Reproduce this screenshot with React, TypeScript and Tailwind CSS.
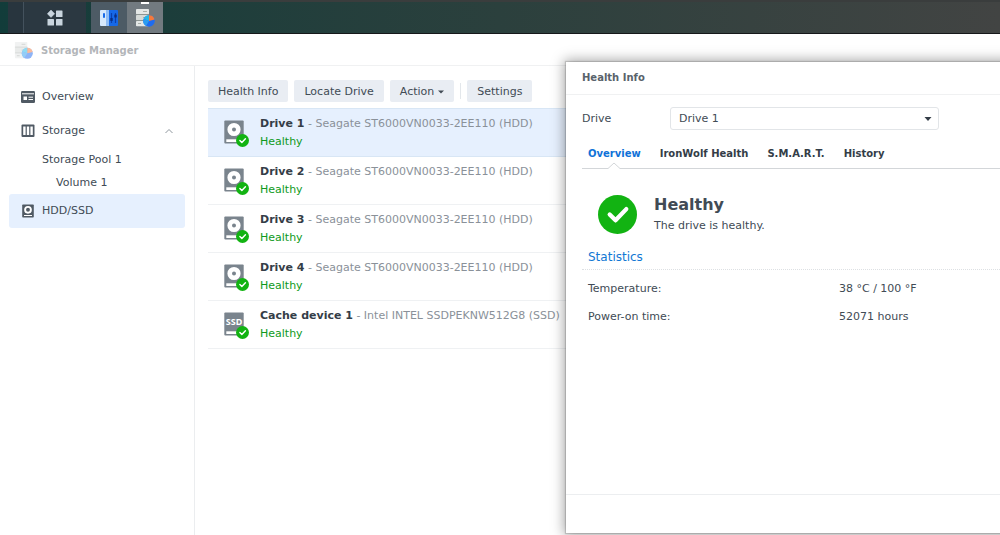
import { useState } from "react";

const drives = [
  { name: "Drive 1", model: "Seagate ST6000VN0033-2EE110 (HDD)", kind: "hdd" },
  { name: "Drive 2", model: "Seagate ST6000VN0033-2EE110 (HDD)", kind: "hdd" },
  { name: "Drive 3", model: "Seagate ST6000VN0033-2EE110 (HDD)", kind: "hdd" },
  { name: "Drive 4", model: "Seagate ST6000VN0033-2EE110 (HDD)", kind: "hdd" },
  { name: "Cache device 1", model: "Intel INTEL SSDPEKNW512G8 (SSD)", kind: "ssd" },
];

const tabs = ["Overview", "IronWolf Health", "S.M.A.R.T.", "History"];

const statistics = [
  { label: "Temperature:", value: "38 °C / 100 °F" },
  { label: "Power-on time:", value: "52071 hours" },
];

function StorageIcon({ className }: { className: string }) {
  return (
    <svg viewBox="0 0 20 20" className={className} aria-hidden="true">
      <rect x="1" y="1" width="13" height="5.2" rx="0.8" fill="#e4e7e6" />
      <rect x="1" y="7" width="13" height="5.2" rx="0.8" fill="#d5d9d7" />
      <rect x="1" y="13" width="13" height="5.2" rx="0.8" fill="#e4e7e6" />
      <path d="M8 3.5h4M8 9.5h3M3 15.5h3" stroke="#a9aeab" strokeWidth="1" />
      <path d="M1 6.5h13M1 12.5h10" stroke="#8e9592" strokeWidth="0.8" />
      <circle cx="14" cy="13" r="5.8" fill="#1f6cf0" />
      <path d="M14 13V7.2A5.8 5.8 0 0 0 8.6 11z" fill="#22b8e8" />
      <path d="M14 13V7.2A5.8 5.8 0 0 1 19.6 11.5z" fill="#f5793b" />
      <path d="M14 13l-5.4-2A5.8 5.8 0 0 0 11 17.9z" fill="#2b9cf0" />
    </svg>
  );
}

function ControlPanelIcon() {
  return (
    <svg viewBox="0 0 20 18" className="h-[18px] w-5" aria-hidden="true">
      <rect x="1" y="1" width="18" height="16" rx="1" fill="#1669e8" />
      <path d="M2 1h8v16H2a1 1 0 0 1-1-1V2a1 1 0 0 1 1-1z" fill="#d6e8fc" />
      <path d="M7 1h3v16H7z" fill="#8fbcf5" />
      <rect x="4" y="4" width="2" height="5" rx="1" fill="#1669e8" />
      <path d="M12.5 4v10M16.5 4v10" stroke="#0b3fae" strokeWidth="1.2" />
      <rect x="11.3" y="9" width="2.4" height="3" rx="0.6" fill="#082f86" />
      <rect x="15.3" y="5.5" width="2.4" height="3" rx="0.6" fill="#082f86" />
    </svg>
  );
}

function MenuIcon() {
  return (
    <svg viewBox="0 0 16 16" className="size-4" fill="#c9d5de" aria-hidden="true">
      <path d="M4 0l3.7 3.7L4 7.4.3 3.7z" stroke="#c9d5de" strokeWidth="0.5" />
      <rect x="9" y="0.5" width="6.5" height="6.5" rx="0.6" />
      <rect x="0.5" y="9" width="6.5" height="6.5" rx="0.6" />
      <rect x="9" y="9" width="6.5" height="6.5" rx="0.6" />
    </svg>
  );
}

function OverviewIcon() {
  return (
    <svg viewBox="0 0 14 12" className="h-3 w-3.5" aria-hidden="true">
      <rect width="14" height="12" rx="1.2" fill="#505a64" />
      <path d="M1 2.8h12" stroke="#fff" strokeWidth="1" />
      <rect x="2.5" y="5.5" width="3.5" height="3.5" fill="#fff" />
      <path d="M7.5 6.2H12M7.5 8.5H12" stroke="#fff" strokeWidth="1" />
    </svg>
  );
}

function PoolIcon() {
  return (
    <svg viewBox="0 0 14 14" className="size-3.5" aria-hidden="true">
      <rect x="0.5" y="0.5" width="13" height="12.5" rx="1" fill="#505a64" />
      <path d="M2.2 2.5h2.4V11H2.2zM5.8 2.5h2.4V11H5.8zM9.4 2.5h2.4V11H9.4z" fill="#fff" />
    </svg>
  );
}

function DiskIcon() {
  return (
    <svg viewBox="0 0 14 14" className="size-3.5" aria-hidden="true">
      <rect x="1.2" y="0.5" width="11.6" height="13" rx="0.8" fill="#505a64" />
      <circle cx="7" cy="5.8" r="2.9" fill="none" stroke="#fff" strokeWidth="1.9" />
      <path d="M3 11.5h8" stroke="#fff" strokeWidth="1" />
    </svg>
  );
}

function Check({ className }: { className: string }) {
  return (
    <svg viewBox="0 0 40 40" className={className} aria-hidden="true">
      <circle cx="20" cy="20" r="20" fill="#12b312" />
      <path d="M12 20l6 6L29 14.5" fill="none" stroke="#fff" strokeWidth="4.4" strokeLinecap="round" strokeLinejoin="round" />
    </svg>
  );
}

function DriveIcon({ kind }: { kind: string }) {
  return (
    <span className="relative block h-[26px] w-6 shrink-0">
      <svg viewBox="0 0 20 24" className="h-6 w-5" aria-hidden="true">
        <rect x="0.3" y="0.5" width="19.4" height="23" rx="1" fill="#7a848d" />
        {kind === "hdd" && (
          <circle cx="10" cy="9.5" r="4.3" fill="none" stroke="#fff" strokeWidth="4.6" />
        )}
        <path d="M2.3 19.3h13V22h-13z" fill="#fff" />
      </svg>
      {kind === "ssd" && (
        <span className="absolute top-1 left-0 w-5 text-center font-['Noto_Sans',sans-serif] text-[9px] leading-3 font-bold text-white">SSD</span>
      )}
      <Check className="absolute -right-px -bottom-px size-[13px]" />
    </span>
  );
}

const toolButton =
  "flex h-[22px] items-center rounded-[2px] bg-[#e9edf3] px-[10px] pt-px text-[#414b55] hover:bg-[#dfe5ed]";

export default function App() {
  const [tab, setTab] = useState("Overview");
  const [drive, setDrive] = useState("Drive 1");

  return (
    <div className="relative flex h-screen flex-col overflow-hidden bg-white font-['Verdana','DejaVu_Sans',sans-serif] text-[11px] leading-[18px] text-[#414b55]">
      <header className="flex h-[34px] shrink-0 border-t-2 border-b border-t-[#3a3d3d] border-b-[#16181a] bg-linear-to-r from-[#123c3a] via-[#2b403d] to-[#424443] pl-2">
        <div className="w-4 border-r border-[#44525d] bg-[#28353e]" />
        <button aria-label="Main menu" className="flex w-[62px] items-center justify-center bg-[#2b3841]">
          <MenuIcon />
        </button>
        <button aria-label="Control Panel" className="ml-[5px] flex w-9 items-center justify-center bg-[#4d5b65]">
          <ControlPanelIcon />
        </button>
        <button aria-label="Storage Manager" className="relative flex w-9 items-center justify-center bg-[#727a80]">
          <span className="absolute top-0 left-3.5 h-0.5 w-2 bg-white" />
          <StorageIcon className="size-5" />
        </button>
      </header>

      <div className="flex h-8 shrink-0 items-center gap-2 border-b border-[#f0f1f2] pt-0.5 pl-3.5">
        <StorageIcon className="size-[19px] opacity-50" />
        <h1 className="text-[10px] font-bold text-[#b3b6b9]">Storage Manager</h1>
      </div>

      <div className="flex min-h-0 flex-1">
        <nav className="w-[195px] shrink-0 border-r border-[#ebedef] px-[9px] pt-3.5">
          <a href="#overview" className="flex h-[34px] items-center gap-[7px] pl-3">
            <OverviewIcon />
            Overview
          </a>
          <a href="#storage" className="flex h-[34px] items-center gap-[7px] pr-3 pl-3">
            <PoolIcon />
            <span className="flex-1">Storage</span>
            <svg viewBox="0 0 8 6" className="h-1.5 w-2" aria-hidden="true">
              <path d="M0.5 5L4 1.5 7.5 5" fill="none" stroke="#8d959c" />
            </svg>
          </a>
          <a href="#pool" className="flex h-[23px] items-center pl-[33px]">Storage Pool 1</a>
          <a href="#volume" className="flex h-[23px] items-center pl-[47px]">Volume 1</a>
          <a href="#drives" className="flex h-[34px] items-center gap-[7px] rounded-[3px] bg-[#e6f0fe] pl-3">
            <DiskIcon />
            HDD/SSD
          </a>
        </nav>

        <main className="min-w-0 flex-1 pt-3.5 pl-[13px]">
          <div className="flex items-center gap-1.5">
            <button className={toolButton}>Health Info</button>
            <button className={toolButton}>Locate Drive</button>
            <button className={toolButton}>
              Action
              <svg viewBox="0 0 6 4" className="ml-1 h-1 w-1.5" aria-hidden="true">
                <path d="M0 0.5h6L3 3.5z" fill="#414b55" />
              </svg>
            </button>
            <span className="h-4 w-px bg-[#e3e7eb]" />
            <button className={toolButton}>Settings</button>
          </div>
          <ul className="mt-1.5 border-t border-[#d8e6f5]">
            {drives.map((d) => (
              <li
                key={d.name}
                className={
                  d.name === drive
                    ? "flex h-12 items-center border-b border-[#d8e6f5] bg-[#e6f0fe] pt-px pl-4"
                    : "flex h-12 items-center border-b border-[#eff1f3] pt-px pl-4"
                }
              >
                <DriveIcon kind={d.kind} />
                <div className="ml-3 whitespace-nowrap">
                  <p className="text-[#8a9199]">
                    <b className="text-[#343d47]">{d.name}</b> - {d.model}
                  </p>
                  <p className="text-[#0f9a1c]">Healthy</p>
                </div>
              </li>
            ))}
          </ul>
        </main>
      </div>

      <section
        role="dialog"
        aria-label="Health Info"
        className="absolute top-[62px] right-[-20px] bottom-0.5 left-[566px] flex flex-col bg-white pr-5 shadow-[0_0_12px_2px_rgba(0,0,0,0.35),0_0_1px_1px_rgba(0,0,0,0.15)]"
      >
        <h2 className="flex h-[33px] shrink-0 items-center border-b border-[#f0f1f2] pl-4 text-[10px] font-bold text-[#59626b]">
          Health Info
        </h2>
        <div className="flex-1 pt-3 pl-4">
          <div className="flex items-center">
            <label htmlFor="drive" className="w-22 pt-px">Drive</label>
            <div className="relative w-[269px]">
              <select
                id="drive"
                value={drive}
                onChange={(e) => setDrive(e.target.value)}
                className="block h-[23px] w-full appearance-none rounded-[3px] border border-[#e2e5e8] bg-white pt-px pr-6 pl-2 leading-5"
              >
                {drives.map((d) => (
                  <option key={d.name}>{d.name}</option>
                ))}
              </select>
              <svg viewBox="0 0 8 4" className="pointer-events-none absolute top-[10px] right-[7px] h-1 w-2" aria-hidden="true">
                <path d="M0.5 0h7L4 4z" fill="#343d47" />
              </svg>
            </div>
          </div>

          <div role="tablist" className="mt-2 flex h-[31px] gap-[19px] border-b border-[#d3d6d9] pl-1.5 text-[10px] font-bold">
            {tabs.map((t) => (
              <button
                key={t}
                role="tab"
                aria-selected={t === tab}
                onClick={() => setTab(t)}
                className={t === tab ? "relative pt-0.5 text-[#0f72d8]" : "relative pt-0.5 text-[#343d47]"}
              >
                {t}
                {t === tab && (
                  <svg viewBox="0 0 12 7" className="absolute bottom-[-1px] left-1/2 h-[7px] w-3 -translate-x-1/2" aria-hidden="true">
                    <path d="M0 6.5L6 1l6 5.5V7H0z" fill="#fff" />
                    <path d="M0 6.5L6 1l6 5.5" fill="none" stroke="#d3d6d9" />
                  </svg>
                )}
              </button>
            ))}
          </div>

          <div className="flex items-center pt-6 pl-4">
            <Check className="size-[39px]" />
            <div className="ml-[17px]">
              <p className="text-[16px] leading-6 font-bold">Healthy</p>
              <p>The drive is healthy.</p>
            </div>
          </div>

          <h3 className="mt-3 border-b border-dotted border-[#dde0e3] pb-0.5 pl-1.5 text-[12px] leading-5 text-[#1278d4]">Statistics</h3>
          <dl className="mt-[5px] pl-1.5">
            {statistics.map((s) => (
              <div key={s.label} className="flex h-7 items-center">
                <dt className="w-[251px]">{s.label}</dt>
                <dd>{s.value}</dd>
              </div>
            ))}
          </dl>
        </div>
        <footer className="h-[39px] shrink-0 border-t border-[#eceef0]" />
      </section>
    </div>
  );
}
